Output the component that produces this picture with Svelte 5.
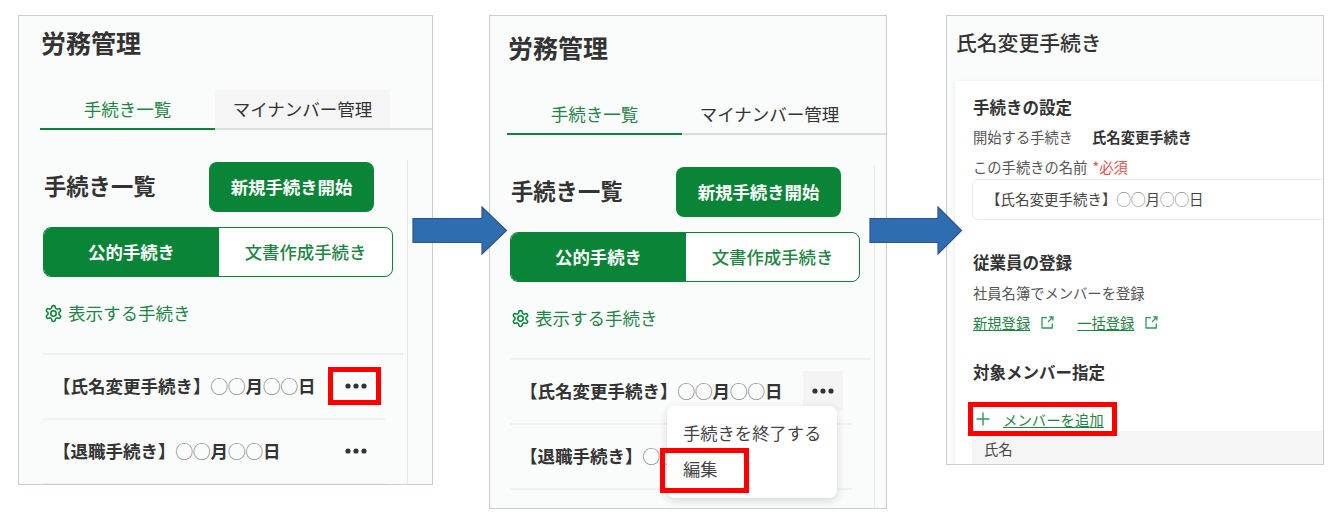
<script>
	const gearPath =
		'M12.22 2h-.44a2 2 0 0 0-2 2v.18a2 2 0 0 1-1 1.73l-.43.25a2 2 0 0 1-2 0l-.15-.08a2 2 0 0 0-2.73.73l-.22.38a2 2 0 0 0 .73 2.73l.15.1a2 2 0 0 1 1 1.72v.51a2 2 0 0 1-1 1.74l-.15.09a2 2 0 0 0-.73 2.73l.22.38a2 2 0 0 0 2.73.73l.15-.08a2 2 0 0 1 2 0l.43.25a2 2 0 0 1 1 1.73V20a2 2 0 0 0 2 2h.44a2 2 0 0 0 2-2v-.18a2 2 0 0 1 1-1.73l.43-.25a2 2 0 0 1 2 0l.15.08a2 2 0 0 0 2.73-.73l.22-.39a2 2 0 0 0-.73-2.73l-.15-.08a2 2 0 0 1-1-1.74v-.5a2 2 0 0 1 1-1.74l.15-.09a2 2 0 0 0 .73-2.73l-.22-.38a2 2 0 0 0-2.73-.73l-.15.08a2 2 0 0 1-2 0l-.43-.25a2 2 0 0 1-1-1.73V4a2 2 0 0 0-2-2z';
</script>

{#snippet dots()}
	<svg width="22" height="6" viewBox="0 0 22 6" fill="#333">
		<circle cx="3" cy="3" r="2.6" />
		<circle cx="11" cy="3" r="2.6" />
		<circle cx="19" cy="3" r="2.6" />
	</svg>
{/snippet}

{#snippet extIcon()}
	<svg class="ext" width="13" height="13" viewBox="0 0 13 13" fill="none" stroke="#2f9a5c" stroke-width="1.3">
		<path d="M6 1.7H1v10.3h10.3V7.5" />
		<path d="M7 6l4.6-4.8M8.4 1h3.5v3.5" />
	</svg>
{/snippet}

{#snippet date()}
	<i>◯◯</i>月<i>◯◯</i>日
{/snippet}

{#snippet laborPanel(hover)}
	<h1 class="title">労務管理</h1>
	<div class="tabs">
		<div class="tab active">手続き一覧</div>
		<div class="tab" class:tab-hover={hover}>マイナンバー管理</div>
	</div>
	<div class="body">
		<div class="head">
			<h2>手続き一覧</h2>
			<button class="primary">新規手続き開始</button>
		</div>
		<div class="toggle">
			<div class="seg on">公的手続き</div>
			<div class="seg">文書作成手続き</div>
		</div>
		<div class="show">
			<svg width="19" height="19" viewBox="0 0 24 24" fill="none" stroke="#0a8537" stroke-width="2">
				<path d={gearPath} />
				<circle cx="12" cy="12" r="3.4" />
			</svg>
			<span>表示する手続き</span>
		</div>
		<ul class="list">
			<li>
				<span class="name">【氏名変更手続き】{@render date()}</span>
				<span class="more" class:more-on={!hover}>{@render dots()}</span>
			</li>
			<li>
				<span class="name">【退職手続き】{@render date()}</span>
				<span class="more">{@render dots()}</span>
			</li>
		</ul>
	</div>
{/snippet}

<div class="page">
	<section class="panel p1">{@render laborPanel(true)}</section>

	<section class="panel p2">
		{@render laborPanel(false)}
		<div class="menu">
			<div>手続きを終了する</div>
			<div>編集</div>
		</div>
	</section>

	<section class="panel p3">
		<h1 class="title3">氏名変更手続き</h1>
		<div class="card">
			<h3>手続きの設定</h3>
			<p class="kv">開始する手続き<b>氏名変更手続き</b></p>
			<p class="label">この手続きの名前 <span class="req">*必須</span></p>
			<div class="input"><span>【氏名変更手続き】{@render date()}</span></div>

			<h3 class="emp">従業員の登録</h3>
			<p class="note">社員名簿でメンバーを登録</p>
			<div class="links">
				<a href="#a">新規登録</a>
				{@render extIcon()}
				<a href="#b" class="second">一括登録</a>
				{@render extIcon()}
			</div>

			<h3 class="target">対象メンバー指定</h3>
			<div class="add">
				<svg width="14" height="14" viewBox="0 0 14 14" stroke="#2f9a5c" stroke-width="1.4">
					<path d="M7 0.5v13M0.5 7h13" />
				</svg>
				<a href="#c">メンバーを追加</a>
			</div>
			<div class="thead">氏名</div>
		</div>
	</section>

	<svg class="arrow a1" width="96" height="49" viewBox="0 0 96 49">
		<path d="M1 12.5h69V1l24.5 23.5L70 48V36.5H1z" />
	</svg>
	<svg class="arrow a2" width="94" height="49" viewBox="0 0 94 49">
		<path d="M1 12.5h68V1l23.5 23.5L69 48V36.5H1z" />
	</svg>

	<div class="mark m1"></div>
	<div class="mark m2"></div>
	<div class="mark m3"></div>
</div>

<style>
	:global(body) {
		margin: 0;
		background: #fff;
	}

	.page {
		position: relative;
		width: 1341px;
		height: 524px;
		display: flex;
		align-items: flex-start;
		padding: 15px 0 0 18px;
		box-sizing: border-box;
		overflow: hidden;
		font-family: 'Noto Sans CJK JP', 'Noto Sans', sans-serif;
		color: #333;
	}

	.panel {
		position: relative;
		box-sizing: border-box;
		border: 1px solid #ccc;
		background: #fafbfb;
		overflow: hidden;
	}

	.p1 {
		width: 415px;
		height: 470px;
		padding-left: 21px;
	}

	.p2 {
		width: 398px;
		height: 494px;
		margin-left: 56px;
		padding-left: 17px;
		padding-top: 5px;
	}

	.p3 {
		width: 378px;
		height: 450px;
		margin-left: 59px;
	}

	.title {
		margin: 11px 0 0;
		padding-left: 1px;
		font-size: 25px;
		line-height: 30px;
		font-weight: 700;
		color: #333;
	}

	.tabs {
		display: flex;
		margin-top: 33px;
		border-bottom: 2px solid #ddd;
		margin-right: -40px;
	}

	.tab {
		width: 175px;
		height: 38px;
		box-sizing: border-box;
		padding-bottom: 2px;
		display: flex;
		align-items: center;
		justify-content: center;
		font-size: 17.5px;
		color: #333;
	}

	.tab-hover {
		background: #f5f5f5;
	}

	.tab.active {
		color: #1f8544;
		box-shadow: 0 2px 0 #0a8537;
	}

	.body {
		width: 364px;
		margin: 30px 0 0 3px;
		padding-top: 2px;
		border-right: 1px solid #e6e8e8;
		height: 400px;
	}

	.head {
		display: flex;
		align-items: center;
		height: 50px;
		padding-left: 1px;
	}

	h2 {
		margin: 0 0 4px;
		width: 165px;
		font-size: 22.3px;
		font-weight: 700;
		color: #333;
	}

	.primary {
		width: 165px;
		height: 50px;
		border: 0;
		border-radius: 8px;
		background: #0a8537;
		color: #fff;
		font: 700 17.4px 'Noto Sans CJK JP', sans-serif;
		padding: 0 0 2px;
	}

	.toggle {
		display: flex;
		width: 350px;
		height: 50px;
		margin-top: 15px;
		box-sizing: border-box;
		border: 1px solid #0a8537;
		border-radius: 8px;
		overflow: hidden;
		background: #fff;
		color: #1f8544;
		font-size: 17.4px;
		font-weight: 500;
	}

	.seg {
		flex: 1;
		display: flex;
		align-items: center;
		justify-content: center;
		padding-bottom: 2px;
	}

	.seg.on {
		flex: 0 0 175px;
		background: #0a8537;
		color: #fff;
		font-weight: 700;
	}

	.show {
		display: flex;
		align-items: center;
		gap: 5px;
		height: 24px;
		margin-top: 24px;
		padding-left: 1px;
		font-size: 17.5px;
		color: #1f8544;
	}

	.show span {
		margin-top: -2px;
	}

	.list {
		list-style: none;
		margin: 28px 3px 0 0;
		padding: 0;
		border-top: 2px solid #eff0f0;
	}

	.list li {
		display: flex;
		align-items: center;
		justify-content: space-between;
		box-sizing: border-box;
		width: 342px;
		height: 65px;
		padding: 0 17px 0 9px;
		border-bottom: 2px solid #eff0f0;
		position: relative;
	}

	.name {
		font-size: 17.5px;
		font-weight: 700;
		color: #333;
		white-space: nowrap;
		margin: -3px 0 0 1px;
	}

	i {
		font-style: normal;
		font-weight: 400;
		color: #666;
	}

	.more {
		display: flex;
		align-items: center;
		justify-content: center;
		width: 40px;
		height: 40px;
		margin: -2px -8px 0 0;
	}

	.more-on {
		background: #f4f4f4;
	}

	.menu {
		position: absolute;
		left: 177px;
		top: 390px;
		width: 170px;
		height: 92px;
		box-sizing: border-box;
		padding: 9px 0 0 16px;
		background: #fff;
		border-radius: 8px;
		box-shadow: 0 3px 10px rgba(0, 0, 0, 0.14);
		font-size: 17.3px;
		line-height: 36px;
		color: #444;
		white-space: nowrap;
	}

	.title3 {
		margin: 11px 0 0 9px;
		font-size: 20.8px;
		line-height: 30px;
		font-weight: 500;
		color: #333;
	}

	.card {
		margin: 24px 0 0 8px;
		height: 400px;
		padding: 15px 0 0 18px;
		background: #fff;
		box-shadow: -1px 0 3px rgba(0, 0, 0, 0.06);
		font-size: 14.3px;
		color: #555;
	}

	h3 {
		margin: 0;
		font-size: 16.5px;
		line-height: 22px;
		font-weight: 700;
		color: #333;
	}

	p {
		margin: 0;
		line-height: 20px;
	}

	.kv {
		margin-top: 9px;
	}

	.kv b {
		margin-left: 19px;
		color: #333;
	}

	.label {
		margin-top: 10px;
	}

	.req {
		color: #e8504a;
		margin-left: 2px;
	}

	.input {
		width: 420px;
		height: 41px;
		margin: 2px 0 0 -1px;
		box-sizing: border-box;
		display: flex;
		align-items: center;
		padding: 0 0 2px 13px;
		border: 1px solid #ebeded;
		border-radius: 6px;
		color: #444;
		font-size: 14.5px;
	}

	.input i {
		color: #777;
	}

	.emp {
		margin-top: 31px;
	}

	.note {
		margin-top: 10px;
	}

	.links {
		display: flex;
		align-items: center;
		height: 20px;
		margin-top: 9px;
	}

	a {
		color: #1f8544;
		text-decoration: underline;
	}

	.ext {
		margin-left: 11px;
	}

	.second {
		margin-left: 23px;
	}

	.target {
		margin-top: 29px;
	}

	.add {
		display: flex;
		align-items: center;
		gap: 13px;
		height: 20px;
		margin: 26px 0 0 3px;
	}

	.add a {
		font-size: 14.4px;
	}

	.thead {
		width: 420px;
		height: 34px;
		margin: 2px 0 0 -1px;
		padding-left: 12px;
		box-sizing: border-box;
		display: flex;
		align-items: center;
		background: #f5f5f5;
		color: #444;
	}

	.arrow {
		position: absolute;
		top: 206px;
	}

	.arrow path {
		fill: #2e6db0;
		stroke: #2f528f;
		stroke-width: 1.2;
	}

	.a1 {
		left: 411.5px;
	}

	.a2 {
		left: 868.5px;
	}

	.mark {
		position: absolute;
		box-sizing: border-box;
		border: 5px solid #f00;
	}

	.m1 {
		left: 328px;
		top: 367px;
		width: 53px;
		height: 38px;
	}

	.m2 {
		left: 660px;
		top: 448px;
		width: 89px;
		height: 45px;
	}

	.m3 {
		left: 968px;
		top: 402px;
		width: 149px;
		height: 34px;
	}
</style>
